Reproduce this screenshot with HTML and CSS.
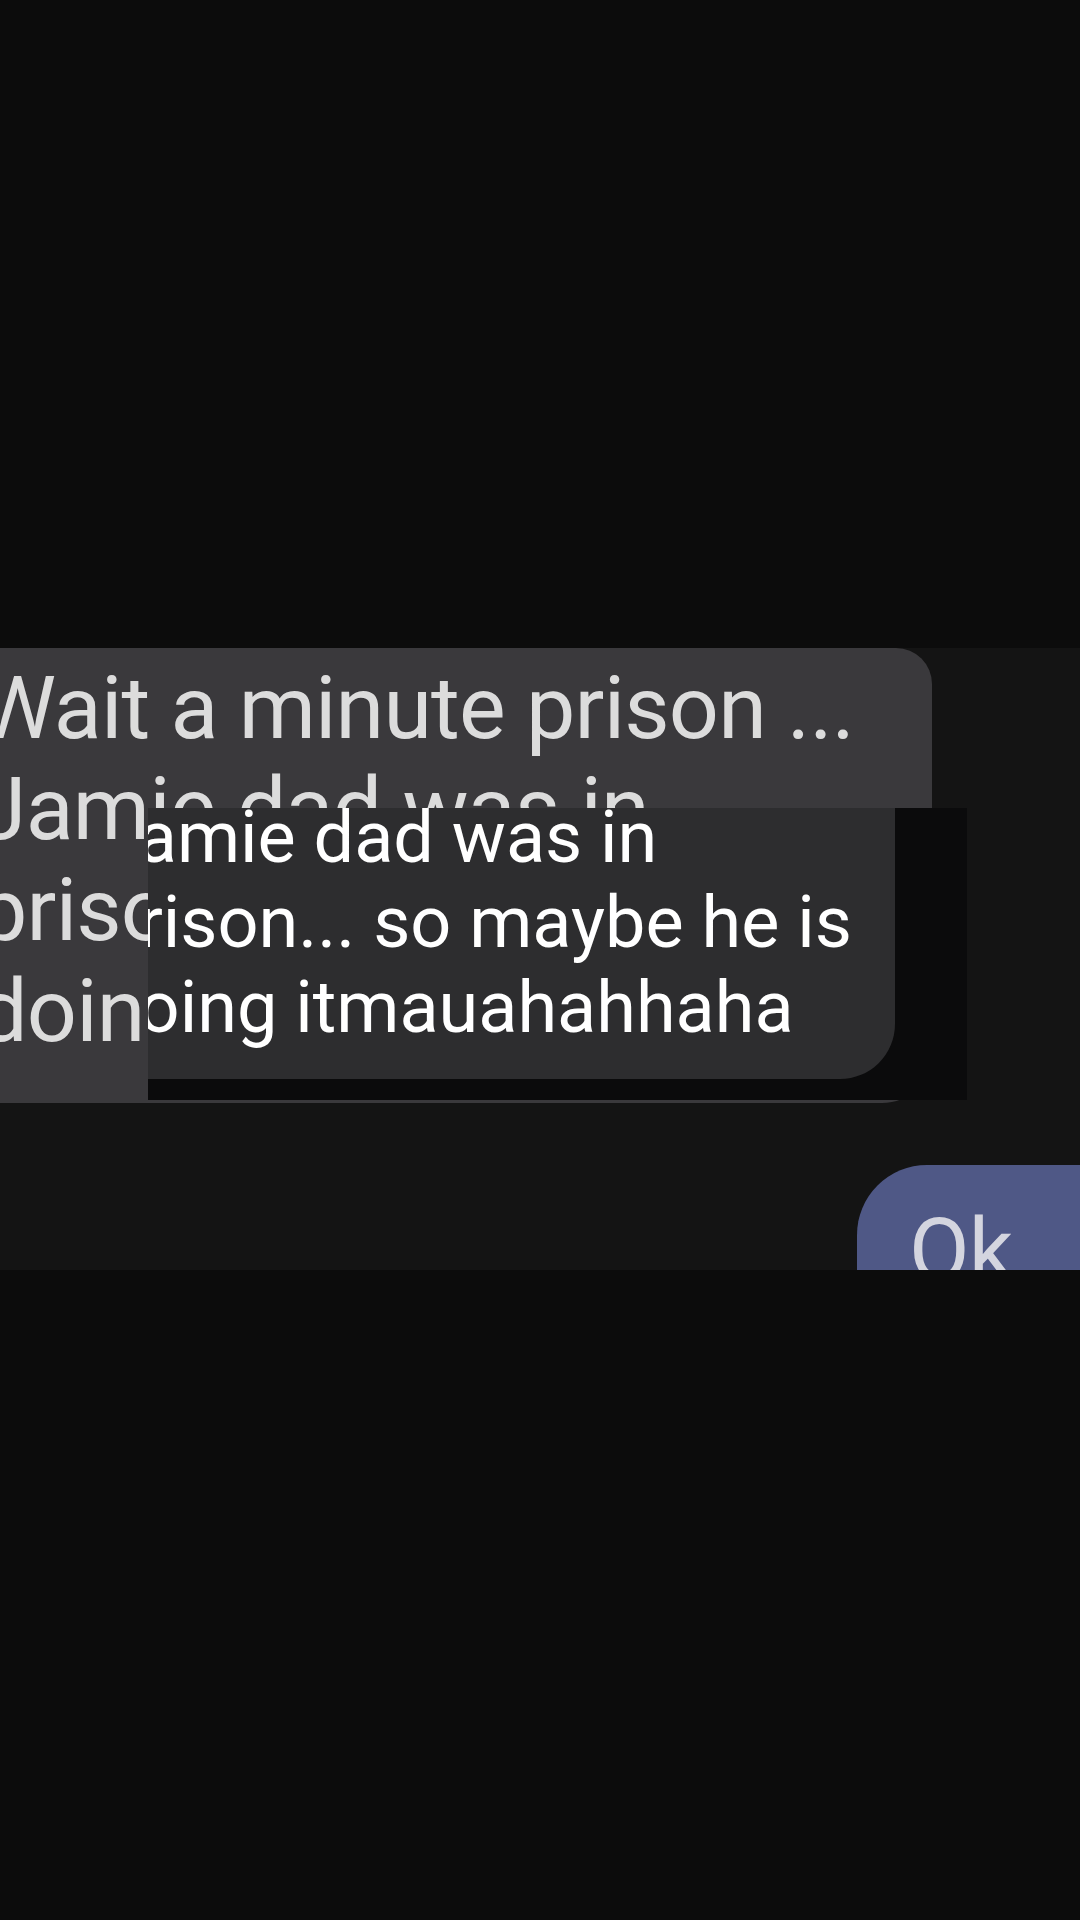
FILE: index.html
```html
<!DOCTYPE html>
<html lang="en">
<head>
    <meta charset="UTF-8">
    <meta name="viewport" content="width=device-width, initial-scale=1.0">
    <title>Chat</title>
    <link rel="stylesheet" href="styles.css">
</head>
<body>
    <div class="screen">
        <div class="band">
            <div class="bubble incoming">
                Wait a minute prison ...<br>
                Jamie dad was in<br>
                prison... so maybe he is<br>
                doing it...
            </div>

            <div class="bubble outgoing">Ok</div>

            <!-- zoomed copy of the same message pasted on top -->
            <div class="overlay">
                <div class="overlay-bubble">
                    <p class="overlay-text">
                        Jamie dad was in<br>
                        prison... so maybe he is<br>
                        doing itmauahahhaha
                    </p>
                </div>
            </div>
        </div>
    </div>
</body>
</html>
```

FILE: styles.css
```css
body {
    margin: 0;
    background-color: #0c0c0c;
    font-family: Roboto, 'Noto Sans', Arial, sans-serif;
}

.screen {
    padding-top: 648px;
    height: 1272px;
}

.band {
    position: relative;
    height: 622px;
    overflow: hidden;
    background-color: #141414;
}

.bubble {
    font-size: 88px;
    line-height: 101px;
    letter-spacing: -0.8px;
    white-space: nowrap;
}

.incoming {
    width: 954px;
    margin-left: -30px;
    padding: 9px 0 42px 8px;
    background-color: #3a393c;
    color: #dcdcdc;
    border-top-right-radius: 36px;
    border-bottom-right-radius: 50px;
}

.outgoing {
    width: 220px;
    height: 140px;
    margin: 62px 0 0 857px;
    padding: 34px 0 0 52px;
    background-color: #4f5886;
    color: #d4d5df;
    border-top-left-radius: 70px;
}

.overlay {
    position: absolute;
    left: 148px;
    top: 160px;
    width: 819px;
    height: 292px;
    background-color: #0b0b0c;
}

.overlay-bubble {
    width: 747px;
    height: 271px;
    overflow: hidden;
    background-color: #2d2d2f;
    border-bottom-right-radius: 55px;
}

.overlay-text {
    margin: -13px 0 0 -50px;
    font-size: 72px;
    line-height: 85px;
    color: #ffffff;
    white-space: nowrap;
}
```
